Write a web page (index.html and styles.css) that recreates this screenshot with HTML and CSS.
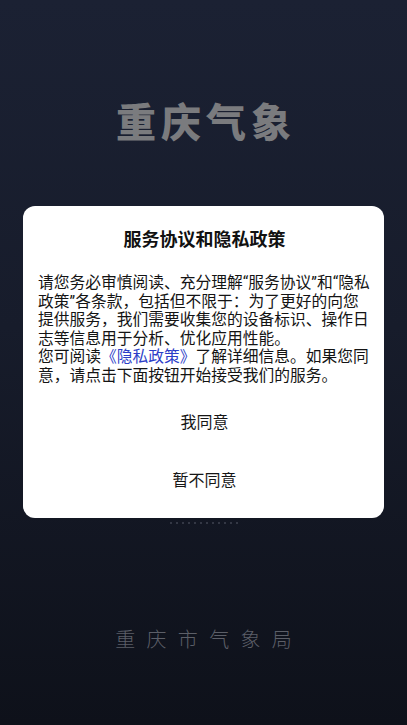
FILE: index.html
```html
<!DOCTYPE html>
<html lang="zh-CN">
<head>
<meta charset="utf-8">
<title>重庆气象</title>
<link rel="stylesheet" href="styles.css">
</head>
<body>
<div class="page">
  <h1 class="brand">重庆气象</h1>
  <div class="loader">
    <span></span><span></span><span></span><span></span><span></span><span></span><span></span><span></span><span></span><span></span><span></span><span></span>
  </div>
  <div class="footer">重庆市气象局</div>
</div>
<div class="dialog">
  <div class="dialog-title">服务协议和隐私政策</div>
  <p class="dialog-body">请您务必审慎阅读、充分理解“服务协议”和“隐私政策”各条款，包括但不限于：为了更好的向您提供服务，我们需要收集您的设备标识、操作日志等信息用于分析、优化应用性能。<br>您可阅读<a class="link">《隐私政策》</a>了解详细信息。如果您同意，请点击下面按钮开始接受我们的服务。</p>
  <div class="btn">我同意</div>
  <div class="btn">暂不同意</div>
</div>
</body>
</html>
```
FILE: styles.css
```css
html, body {
  margin: 0;
  padding: 0;
}
body {
  width: 407px;
  height: 725px;
  overflow: hidden;
  background: linear-gradient(180deg, #1b2133 0%, #171c2b 45%, #0e111a 100%);
  font-family: "Roboto", "Noto Sans CJK SC", sans-serif;
  position: relative;
}
.page {
  display: flex;
  flex-direction: column;
  align-items: center;
  height: 725px;
}
.brand {
  margin: 100px 0 0 0;
  font-family: "Noto Sans CJK SC", sans-serif;
  font-size: 40px;
  line-height: 40px;
  font-weight: 900;
  color: #7a7b7e;
  letter-spacing: 5px;
  padding-left: 5px;
}
.loader {
  margin-top: 381px;
  display: flex;
  gap: 4px;
  height: 3px;
  align-items: center;
}
.loader span {
  width: 2px;
  height: 2px;
  border-radius: 1px;
  background: rgba(200, 205, 220, 0.25);
}
.footer {
  margin-top: 105px;
  font-family: "Noto Sans CJK SC", sans-serif;
  font-weight: 300;
  font-size: 20px;
  line-height: 20px;
  color: #5c5f68;
  letter-spacing: 11.3px;
  padding-left: 11.3px;
}
.dialog {
  position: absolute;
  top: 206px;
  left: 23px;
  width: 361px;
  height: 312px;
  box-sizing: border-box;
  background: #ffffff;
  border-radius: 12px;
  padding: 22px 13px 10px 15px;
  display: flex;
  flex-direction: column;
}
.dialog-title {
  text-align: center;
  font-size: 18px;
  line-height: 24px;
  font-weight: 700;
  color: #111111;
}
.dialog-body {
  margin: 22px 0 0 0;
  font-size: 15.75px;
  line-height: 18.6px;
  color: #141414;
}
.link {
  color: #2c3ec8;
}
.btn {
  height: 58px;
  display: flex;
  align-items: center;
  justify-content: center;
  font-size: 16px;
  color: #161616;
}
.dialog-body + .btn {
  margin-top: 6px;
}
```
